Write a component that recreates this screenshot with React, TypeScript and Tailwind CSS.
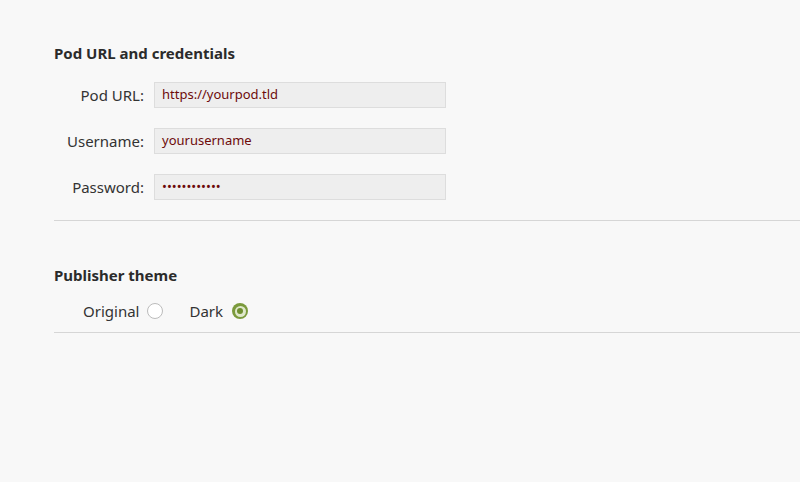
const fields = [
  { label: "Pod URL:", value: "https://yourpod.tld" },
  { label: "Username:", value: "yourusername" },
  { label: "Password:", value: "••••••••••••" },
];

const App = () => {
  return (
    <div className="w-[800px] h-[482px] bg-[#f8f8f8] font-['Noto_Sans',sans-serif] text-[#333] overflow-hidden">
      <div className="pl-[54px] pt-[43px]">
        <h2 className="text-[15px] font-bold leading-[20px] text-[#2b2b2b]">Pod URL and credentials</h2>
        <div className="flex flex-col gap-[20px] mt-[19px]">
          {fields.map((f) => (
            <div key={f.label} className="flex items-center">
              <label className="w-[100px] text-right text-[15px] text-[#333] pr-[10px]">{f.label}</label>
              <div className="w-[292px] h-[26px] bg-[#eeeeee] border border-[#dddddd] flex items-center pl-[7px] text-[13px] text-[#6d0a0a]">
                {f.value}
              </div>
            </div>
          ))}
        </div>
        <div className="mt-[20px] border-t border-[#d6d6d6]" />
        <h2 className="mt-[44px] text-[15px] font-bold leading-[20px] text-[#2b2b2b]">Publisher theme</h2>
        <div className="flex items-center h-[30px] mt-[11px] pl-[29px] text-[15px]">
          <span>Original</span>
          <span className="ml-[8px] w-[16px] h-[16px] rounded-full border border-[#bcbcbc] bg-white" />
          <span className="ml-[26px]">Dark</span>
          <span className="ml-[9px] w-[16px] h-[16px] rounded-full bg-[#7b9a3c] flex items-center justify-center">
            <span className="w-[11px] h-[11px] rounded-full bg-[#dfe8cb] flex items-center justify-center">
              <span className="w-[6px] h-[6px] rounded-full bg-[#6f8f30]" />
            </span>
          </span>
        </div>
        <div className="mt-[6px] border-t border-[#d6d6d6]" />
      </div>
    </div>
  );
};

export default App;
